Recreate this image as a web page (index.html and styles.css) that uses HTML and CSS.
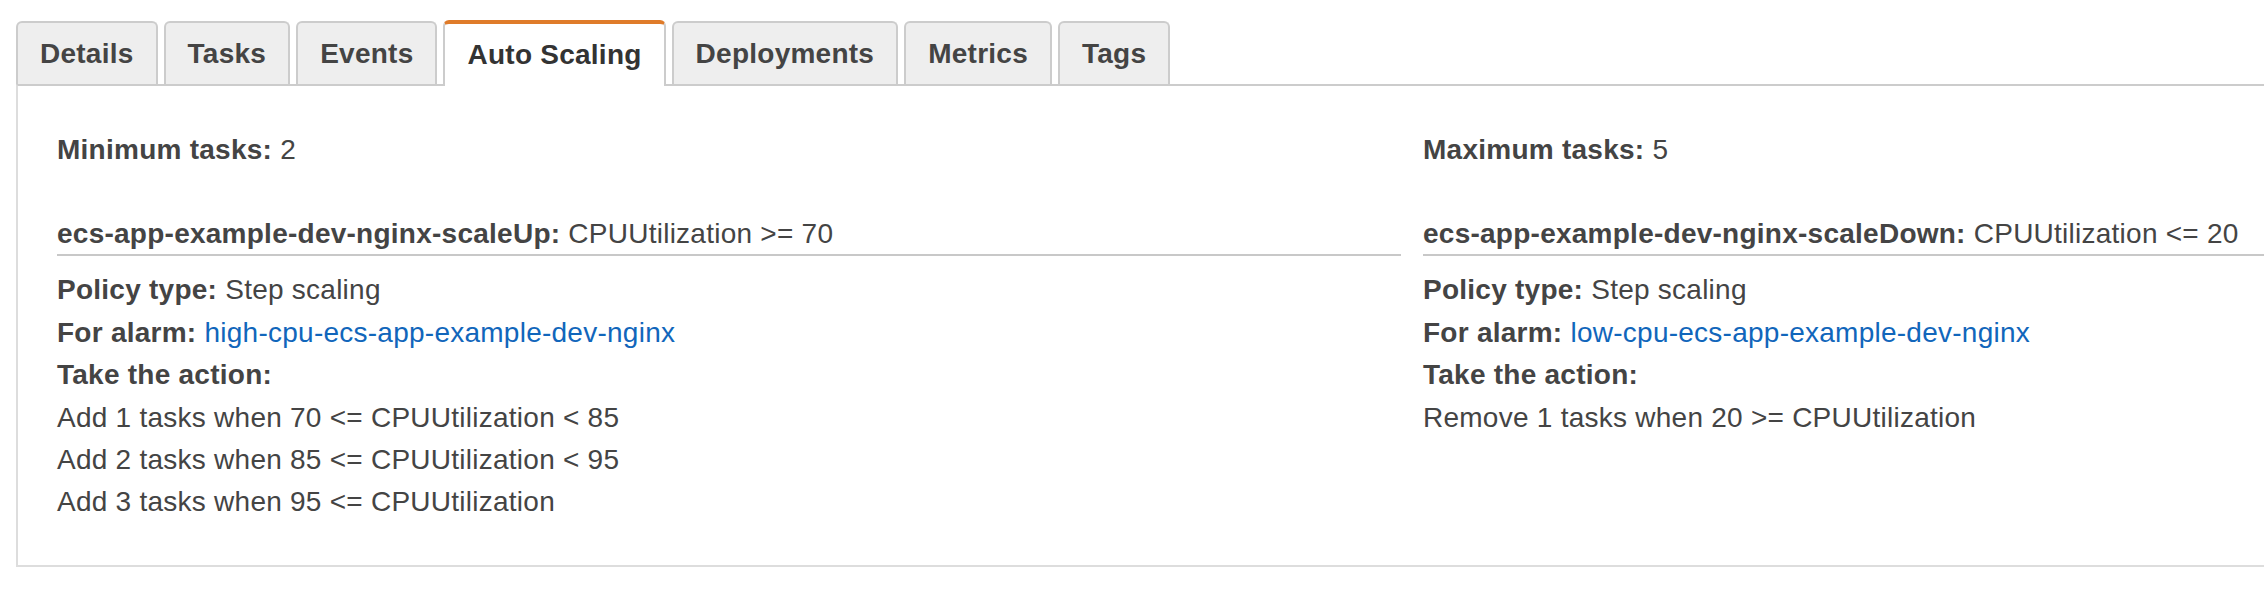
FILE: index.html
```html
<!DOCTYPE html>
<html lang="en">
<head>
<meta charset="utf-8">
<title>Service - Auto Scaling</title>
<link rel="stylesheet" href="styles.css">
</head>
<body>
<div class="page">
  <ul class="tabs">
    <li class="tab">Details</li>
    <li class="tab">Tasks</li>
    <li class="tab">Events</li>
    <li class="tab active">Auto Scaling</li>
    <li class="tab">Deployments</li>
    <li class="tab">Metrics</li>
    <li class="tab">Tags</li>
  </ul>
  <div class="panel">
    <div class="columns">
      <div class="col">
        <div class="row limit"><b>Minimum tasks:</b> 2</div>
        <div class="policy-head"><b>ecs-app-example-dev-nginx-scaleUp:</b> CPUUtilization &gt;= 70</div>
        <div class="row"><b>Policy type:</b> Step scaling</div>
        <div class="row"><b>For alarm:</b> <a class="link" href="#">high-cpu-ecs-app-example-dev-nginx</a></div>
        <div class="row"><b>Take the action:</b></div>
        <div class="row">Add 1 tasks when 70 &lt;= CPUUtilization &lt; 85</div>
        <div class="row">Add 2 tasks when 85 &lt;= CPUUtilization &lt; 95</div>
        <div class="row">Add 3 tasks when 95 &lt;= CPUUtilization</div>
      </div>
      <div class="col">
        <div class="row limit"><b>Maximum tasks:</b> 5</div>
        <div class="policy-head"><b>ecs-app-example-dev-nginx-scaleDown:</b> CPUUtilization &lt;= 20</div>
        <div class="row"><b>Policy type:</b> Step scaling</div>
        <div class="row"><b>For alarm:</b> <a class="link" href="#">low-cpu-ecs-app-example-dev-nginx</a></div>
        <div class="row"><b>Take the action:</b></div>
        <div class="row">Remove 1 tasks when 20 &gt;= CPUUtilization</div>
      </div>
    </div>
  </div>
</div>
</body>
</html>
```
FILE: styles.css
```css
html, body {
  margin: 0;
  padding: 0;
  background: #ffffff;
  overflow: hidden;
}
body {
  font-family: "Liberation Sans", Arial, Helvetica, sans-serif;
  font-size: 28px;
  letter-spacing: 0.25px;
  color: #444444;
}
.page {
  padding: 20px 0 0 16px;
  width: 2800px;
}
.tabs {
  list-style: none;
  margin: 0;
  padding: 0;
  display: flex;
  align-items: flex-start;
  gap: 6px;
  position: relative;
  z-index: 1;
}
.tab {
  box-sizing: border-box;
  height: 63px;
  margin-top: 1px;
  padding: 0 22px;
  display: flex;
  align-items: center;
  background: #eeeeee;
  border: 2px solid #cccccc;
  border-bottom: none;
  border-radius: 6px 6px 0 0;
  font-weight: bold;
  color: #444444;
}
.tab.active {
  margin-top: 0;
  margin-bottom: -2px;
  height: 66px;
  padding-top: 0;
  background: #ffffff;
  border-top: 4px solid #df7b2a;
  color: #333333;
}
.panel {
  width: 2790px;
  box-sizing: border-box;
  border-top: 2px solid #cccccc;
  border-left: 2px solid #dddddd;
  border-bottom: 2px solid #dddddd;
  padding: 43px 39px 41px 39px;
}
.columns {
  display: grid;
  grid-template-columns: 1fr 1fr;
  column-gap: 22px;
}
.row {
  line-height: 42.4px;
  white-space: nowrap;
}
.limit {
  margin-bottom: 43px;
}
.policy-head {
  line-height: 40px;
  border-bottom: 2px solid #c8c8c8;
  margin-bottom: 13px;
  white-space: nowrap;
}
b {
  font-weight: bold;
  color: #444444;
}
.link {
  color: #1166bb;
  text-decoration: none;
}
```
